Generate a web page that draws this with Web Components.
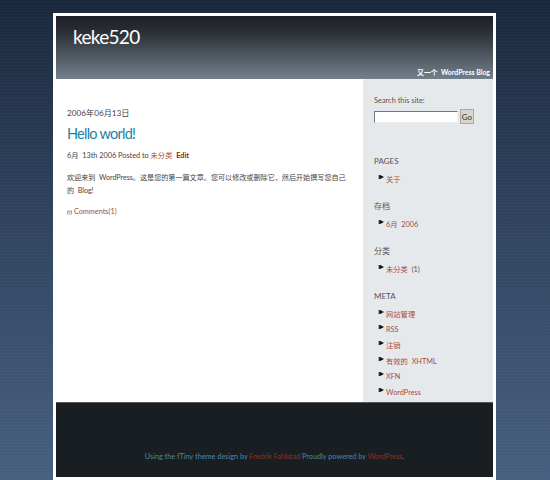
<!DOCTYPE html>
<html>
<head>
<meta charset="utf-8">
<title>keke520</title>
<style>
  html, body { margin: 0; height: 480px; overflow: hidden; }
  body {
    background:
      repeating-linear-gradient(0deg, rgba(255,255,255,.02) 0 1px, transparent 1px 3px),
      linear-gradient(180deg, #1a283c 0, #2b3e58 35%, #47607f 100%);
    font-family: Lato, "Noto Sans CJK SC", sans-serif;
  }
</style>
</head>
<body>
<blog-page>
  <blog-header slot="header" title="keke520"></blog-header>
  <blog-post slot="main"></blog-post>
  <blog-sidebar slot="side"></blog-sidebar>
  <blog-footer slot="footer"></blog-footer>
</blog-page>
<script>
  const LINK = '#ab4a3b';
  const SANS = 'Lato, "Noto Sans CJK SC", sans-serif';

  customElements.define('blog-page', class extends HTMLElement {
    constructor() {
      super();
      this.attachShadow({ mode: 'open' }).innerHTML = `
        <style>
          :host { display: block; width: 437px; margin: 13px 0 0 53px; padding: 3px; background: #fff; }
          .inner { display: block; background: #e6e9ec; }
          .cols { display: grid; grid-template-columns: 307px 130px; height: 323px; }
          .cols ::slotted(blog-post) { background: #fff; }
        </style>
        <div class="inner">
          <slot name="header"></slot>
          <div class="cols"><slot name="main"></slot><slot name="side"></slot></div>
          <slot name="footer"></slot>
        </div>`;
    }
  });

  customElements.define('blog-header', class extends HTMLElement {
    constructor() {
      super();
      this.attachShadow({ mode: 'open' }).innerHTML = `
        <style>
          :host { display: flex; flex-direction: column; justify-content: space-between; height: 63px;
            box-sizing: border-box; padding: 7px 3px 1px 17px; color: #fff; font-family: ${SANS};
            background: linear-gradient(180deg, #1c1f24 0, #2a2f35 25%, #737f8a 100%); }
          h1 { margin: 0; font-size: 19px; letter-spacing: -.7px; line-height: 27px; font-weight: normal; }
          p { margin: 0; text-align: right; font-size: 6.9px; line-height: 11px; font-weight: bold; }
        </style>
        <h1>${this.getAttribute('title')}</h1>
        <p>又一个 &nbsp;WordPress Blog</p>`;
    }
  });

  customElements.define('blog-post', class extends HTMLElement {
    constructor() {
      super();
      this.attachShadow({ mode: 'open' }).innerHTML = `
        <style>
          :host { display: block; padding: 27px 12px 0 11px; color: #444; font-family: ${SANS}; font-size: 7.3px; }
          .date { font-size: 8.2px; line-height: 14px; }
          h2 { margin: 4px 0 5px; font-size: 14.5px; letter-spacing: -.75px; line-height: 20px; font-weight: normal; color: #1b7fa6; }
          .meta, p { margin: 0; line-height: 13px; }
          p { margin-top: 9px; font-size: 7.1px; }
          a { color: ${LINK}; text-decoration: none; }
          b a { color: #8c1f14; }
          p.c { margin-top: 8px; font-size: 7.3px; }
          svg { width: 5px; height: 5px; vertical-align: -0.5px; }
        </style>
        <div class="date">2006年06月13日</div>
        <h2>Hello world!</h2>
        <div class="meta">6月 &nbsp;13th 2006 Posted to <a href="#">未分类</a> &nbsp;<b><a href="#">Edit</a></b></div>
        <p>欢迎来到 &nbsp;WordPress。这是您的第一篇文章。您可以修改或删除它，然后开始撰写您自己的 &nbsp;Blog!</p>
        <p class="c"><svg viewBox="0 0 5 5"><path d="M.5 1h4v3h-4z M.5 1l2 1.5 2-1.5" fill="none" stroke="#888" stroke-width=".7"/></svg> <a href="#">Comments(1)</a></p>`;
    }
  });

  customElements.define('side-list', class extends HTMLElement {
    constructor() {
      super();
      this.attachShadow({ mode: 'open' }).innerHTML = `
        <style>
          :host { display: block; margin-bottom: 11px; color: #555; }
          h3 { margin: 0 0 6.5px; font-size: 8px; line-height: 12px; font-weight: normal; }
        </style>
        <h3>${this.getAttribute('heading')}</h3>
        <slot></slot>`;
    }
  });

  customElements.define('side-item', class extends HTMLElement {
    constructor() {
      super();
      this.attachShadow({ mode: 'open' }).innerHTML = `
        <style>
          :host { display: flex; align-items: flex-start; height: 15.6px; padding-left: 4px; color: ${LINK}; font-size: 7.3px; line-height: 12px; }
          svg { width: 6px; height: 4px; margin: 1px 2px 0 0; flex: none; }
        </style>
        <svg viewBox="0 0 6 4"><path d="M0 0.8 L2.2 0 L6 2 L2.2 4 L0 3.2 L1.4 2 Z" fill="#111"/></svg>
        <span><slot></slot></span>`;
    }
  });

  customElements.define('blog-sidebar', class extends HTMLElement {
    constructor() {
      super();
      this.attachShadow({ mode: 'open' }).innerHTML = `
        <style>
          :host { display: block; padding: 16px 0 0 11px; color: #555; font-family: ${SANS}; font-size: 7.4px; overflow: hidden; }
          label { display: block; line-height: 12px; }
          form { display: flex; gap: 2px; margin: 2px 0 31px; align-items: center; }
          input { width: 84px; height: 12px; box-sizing: border-box; padding: 0; margin: 0; border: 1px solid #777; border-right-color: #eee; border-bottom-color: #eee; background: #fff; }
          button { width: 14px; height: 15px; padding: 0; font: 8px ${SANS}; color: #333; background: #d8d6cc; border: 1px solid #aaa; }
          .n { color: #555; }
        </style>
        <label>Search this site:</label>
        <form><input type="text"><button type="button">Go</button></form>
        <side-list heading="PAGES"><side-item>关于</side-item></side-list>
        <side-list heading="存档"><side-item>6月 &nbsp;2006</side-item></side-list>
        <side-list heading="分类"><side-item>未分类 &nbsp;<span class="n">(1)</span></side-item></side-list>
        <side-list heading="META">
          <side-item>网站管理</side-item>
          <side-item>RSS</side-item>
          <side-item>注销</side-item>
          <side-item>有效的 &nbsp;XHTML</side-item>
          <side-item>XFN</side-item>
          <side-item>WordPress</side-item>
        </side-list>`;
    }
  });

  customElements.define('blog-footer', class extends HTMLElement {
    constructor() {
      super();
      this.attachShadow({ mode: 'open' }).innerHTML = `
        <style>
          :host { display: flex; align-items: flex-end; justify-content: center; height: 75px; box-sizing: border-box;
            padding-bottom: 15px; background: #191e22; border-top: 1px solid #555; color: #4f86a6; font-family: ${SANS}; font-size: 7.3px; line-height: 11px; }
          a { color: #8c3322; text-decoration: none; }
        </style>
        <div>Using the fTiny theme design by <a href="#">Fredrik Fahlstad</a> Proudly powered by <a href="#">WordPress</a>.</div>`;
    }
  });
</script>
</body>
</html>
